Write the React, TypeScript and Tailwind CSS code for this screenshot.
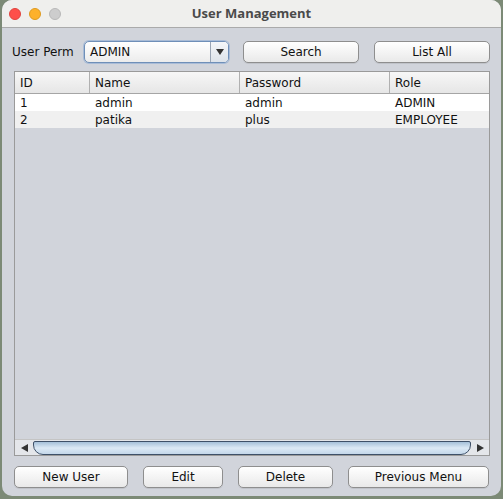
import React from "react";

const font = { fontFamily: '"DejaVu Sans", "Liberation Sans", sans-serif' };

function Btn({ label, w }: { label: string; w: string }) {
  return (
    <div
      className={`${w} h-[22px] flex items-center justify-center rounded-[5px] border border-[#8e8e8e] bg-gradient-to-b from-[#ffffff] to-[#e9e9e9] text-[12px] text-[#111] shadow-[0_1px_0_rgba(0,0,0,0.08)]`}
    >
      {label}
    </div>
  );
}

export default function App() {
  const rows = [
    ["1", "admin", "admin", "ADMIN"],
    ["2", "patika", "plus", "EMPLOYEE"],
  ];
  return (
    <div className="w-[503px] h-[499px] bg-[#7c8a76] overflow-hidden" style={font}>
      <div className="ml-[2px] w-[499px] h-[496px] rounded-[10px] overflow-hidden bg-[#d1d4db] flex flex-col">
        {/* title bar */}
        <div className="h-[28px] bg-[#efefed] border-b border-[#aaaaaa] flex items-center relative">
          <div className="flex gap-[8px] pl-[7px]">
            <div className="w-[12px] h-[12px] rounded-full bg-[#fe4f4a] border border-[#e0443e]" />
            <div className="w-[12px] h-[12px] rounded-full bg-[#fdb12b] border border-[#de9a1f]" />
            <div className="w-[12px] h-[12px] rounded-full bg-[#cdcdcd] border border-[#b8b8b8]" />
          </div>
          <div
            className="absolute inset-0 flex items-center justify-center text-[13px] font-bold text-[#4a4a4a]"
            style={{ fontFamily: '"Open Sans", "Liberation Sans", sans-serif' }}
          >
            User Management
          </div>
        </div>
        {/* top controls */}
        <div className="flex items-center h-[22px] mt-[13px] pl-[10px]">
          <div className="text-[12px] text-[#111] w-[72px]">User Perm</div>
          <div className="w-[145px] h-[22px] rounded-[5px] border border-[#6f8fb8] bg-gradient-to-b from-[#ffffff] to-[#ececec] shadow-[0_0_0_1px_rgba(120,160,210,0.45)] flex items-center">
            <div className="flex-1 pl-[5px] text-[12px] text-[#111]">ADMIN</div>
            <div className="w-[18px] h-[20px] border-l border-[#9aa5b5] flex items-center justify-center bg-gradient-to-b from-[#f4f6f9] to-[#dde3ea] rounded-r-[4px]">
              <div className="w-0 h-0 border-l-[4px] border-r-[4px] border-t-[6px] border-l-transparent border-r-transparent border-t-[#333]" />
            </div>
          </div>
          <div className="ml-[14px]">
            <Btn label="Search" w="w-[116px]" />
          </div>
          <div className="ml-[15px]">
            <Btn label="List All" w="w-[116px]" />
          </div>
        </div>
        {/* table */}
        <div className="ml-[12px] mt-[8px] w-[476px] h-[385px] border border-[#9a9a9a] bg-[#d1d4db] flex flex-col text-[12px] text-[#111]">
          <div className="h-[22px] flex bg-gradient-to-b from-[#f7f7f7] to-[#e6e6e6] border-b border-[#a5a5a5]">
            {["ID", "Name", "Password", "Role"].map((h, i) => (
              <div
                key={h}
                className={`${i === 0 ? "w-[75px]" : i === 3 ? "flex-1" : "w-[150px]"} ${i < 3 ? "border-r border-[#b0b0b0]" : ""} flex items-center pl-[5px]`}
              >
                {h}
              </div>
            ))}
          </div>
          {rows.map((r, ri) => (
            <div key={ri} className={`h-[17px] flex ${ri === 0 ? "bg-white" : "bg-[#f0f0f0]"}`}>
              {r.map((c, i) => (
                <div
                  key={i}
                  className={`${i === 0 ? "w-[75px]" : i === 3 ? "flex-1" : "w-[150px]"} flex items-center pl-[5px] leading-none`}
                >
                  {c}
                </div>
              ))}
            </div>
          ))}
          <div className="flex-1" />
          {/* scrollbar */}
          <div className="h-[16px] flex items-center bg-[#e4e6ea] border-t border-[#c4c4c4]">
            <div className="w-[18px] flex items-center justify-center">
              <div className="w-0 h-0 border-t-[4px] border-b-[4px] border-r-[7px] border-t-transparent border-b-transparent border-r-[#333]" />
            </div>
            <div className="flex-1 h-[14px] rounded-b-[10px] rounded-t-[2px] border border-[#3e5068] bg-gradient-to-b from-[#a5c0d9] via-[#dce9f5] to-[#c4d7ea]" />
            <div className="w-[18px] flex items-center justify-center">
              <div className="w-0 h-0 border-t-[4px] border-b-[4px] border-l-[7px] border-t-transparent border-b-transparent border-l-[#333]" />
            </div>
          </div>
        </div>
        {/* bottom buttons */}
        <div className="flex items-center mt-[10px] pl-[12px]">
          <Btn label="New User" w="w-[114px]" />
          <div className="ml-[15px]">
            <Btn label="Edit" w="w-[80px]" />
          </div>
          <div className="ml-[15px]">
            <Btn label="Delete" w="w-[95px]" />
          </div>
          <div className="ml-[15px]">
            <Btn label="Previous Menu" w="w-[141px]" />
          </div>
        </div>
      </div>
    </div>
  );
}
